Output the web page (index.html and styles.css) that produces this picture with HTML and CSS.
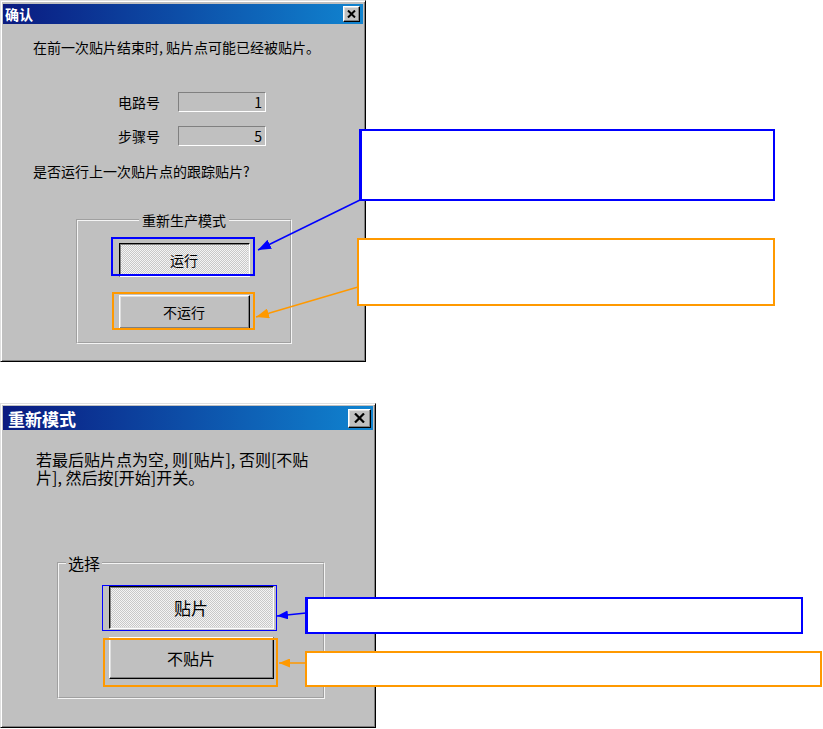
FILE: index.html
```html
<!DOCTYPE html>
<html lang="zh-CN">
<head>
<meta charset="UTF-8" />
<title>重新生产模式</title>
<link rel="stylesheet" href="styles.css">
</head>
<body>

<section class="shot shot-confirm">
  <div class="dlg dlg-confirm">
    <div class="titlebar">
      <span>确认</span>
      <span class="close">
        <svg width="9" height="8" viewBox="0 0 9 8"><path d="M1 0.5 L8 7.5 M8 0.5 L1 7.5" stroke="#000" stroke-width="2"/></svg>
      </span>
    </div>
    <div class="dlg-body">
      <p class="msg msg-first">在前一次贴片结束时, 贴片点可能已经被贴片。</p>
      <div class="field-row"><span class="lbl">电路号</span><span class="field">1</span></div>
      <div class="field-row field-row-2"><span class="lbl">步骤号</span><span class="field">5</span></div>
      <p class="msg msg-ask">是否运行上一次贴片点的跟踪贴片?</p>
      <fieldset class="group">
        <legend>重新生产模式</legend>
        <button class="btn btn-pressed">运行</button>
        <button class="btn btn-second">不运行</button>
      </fieldset>
    </div>
  </div>

  <div class="mark mark-blue c-run"></div>
  <div class="mark mark-orange c-norun"></div>
  <div class="note note-blue n-run"></div>
  <div class="note note-orange n-norun"></div>

  <svg class="arrows" width="823" height="403">
    <defs>
      <marker id="tip-blue-1" markerUnits="userSpaceOnUse" markerWidth="13" markerHeight="10" refX="13" refY="5" orient="auto">
        <path d="M0 0 L13 5 L0 10 Z" fill="#0000ff"/>
      </marker>
      <marker id="tip-orange-1" markerUnits="userSpaceOnUse" markerWidth="13" markerHeight="10" refX="13" refY="5" orient="auto">
        <path d="M0 0 L13 5 L0 10 Z" fill="#ff9900"/>
      </marker>
    </defs>
    <line x1="360" y1="200" x2="258" y2="250" stroke="#0000ff" stroke-width="1.5" marker-end="url(#tip-blue-1)"/>
    <line x1="358" y1="287" x2="256" y2="317" stroke="#ff9900" stroke-width="1.5" marker-end="url(#tip-orange-1)"/>
  </svg>
</section>

<section class="shot shot-mode">
  <div class="dlg dlg-mode">
    <div class="titlebar">
      <span>重新模式</span>
      <span class="close">
        <svg width="11" height="10" viewBox="0 0 11 10"><path d="M1 0.5 L10 9.5 M10 0.5 L1 9.5" stroke="#000" stroke-width="2.2"/></svg>
      </span>
    </div>
    <div class="dlg-body">
      <p class="msg msg-first">若最后贴片点为空, 则[贴片], 否则[不贴<br>片], 然后按[开始]开关。</p>
      <fieldset class="group">
        <legend>选择</legend>
        <button class="btn btn-pressed">贴片</button>
        <button class="btn btn-second">不贴片</button>
      </fieldset>
    </div>
  </div>

  <div class="mark mark-blue c-place"></div>
  <div class="mark mark-orange c-noplace"></div>
  <div class="note note-blue n-place"></div>
  <div class="note note-orange n-noplace"></div>

  <svg class="arrows" width="823" height="326">
    <defs>
      <marker id="tip-blue-2" markerUnits="userSpaceOnUse" markerWidth="11" markerHeight="9" refX="11" refY="4.5" orient="auto">
        <path d="M0 0 L11 4.5 L0 9 Z" fill="#0000ff"/>
      </marker>
      <marker id="tip-orange-2" markerUnits="userSpaceOnUse" markerWidth="11" markerHeight="9" refX="11" refY="4.5" orient="auto">
        <path d="M0 0 L11 4.5 L0 9 Z" fill="#ff9900"/>
      </marker>
    </defs>
    <line x1="306" y1="210" x2="277" y2="213" stroke="#0000ff" stroke-width="1.5" marker-end="url(#tip-blue-2)"/>
    <line x1="306" y1="260" x2="279" y2="260" stroke="#ff9900" stroke-width="1.5" marker-end="url(#tip-orange-2)"/>
  </svg>
</section>

</body>
</html>
```

FILE: styles.css
```css
:root {
  --face: #c0c0c0;
  --shadow: #808080;
  --dark: #000;
  --light: #dfdfdf;
  --blue: #0000ff;
  --orange: #ff9900;
}
* { box-sizing: border-box; }
body {
  margin: 0;
  background: #fff;
  font-family: "Noto Sans CJK SC", "Liberation Sans", sans-serif;
  color: #000;
}
.shot { position: relative; }
.shot-confirm { height: 403px; }
.shot-mode { height: 326px; }

/* ventana estilo Windows clasico */
.dlg {
  background: var(--face);
  border: 1px solid;
  border-color: var(--light) var(--dark) var(--dark) var(--light);
  box-shadow: inset 1px 1px #fff, inset -1px -1px var(--shadow);
  padding: 2px;
}
.dlg-confirm { width: 366px; height: 362px; font-size: 14px; }
.dlg-mode { width: 376px; height: 325px; font-size: 16px; }

.titlebar {
  display: flex;
  align-items: center;
  justify-content: space-between;
  background: linear-gradient(to right, #0a1a80, #1084d0);
  color: #fff;
  font-weight: 700;
}
.dlg-confirm .titlebar { height: 20px; margin-top: 1px; padding: 0 3px 0 2px; font-size: 14px; }
.dlg-mode .titlebar { height: 24px; padding: 0 2px 0 5px; font-size: 17px; }

.close {
  display: flex;
  align-items: center;
  justify-content: center;
  background: var(--face);
  border: 1px solid;
  border-color: #fff var(--dark) var(--dark) #fff;
  box-shadow: inset -1px -1px var(--shadow), inset 1px 1px var(--light);
}
.dlg-confirm .close { width: 17px; height: 16px; }
.dlg-mode .close { width: 23px; height: 19px; }

.msg { margin: 0; line-height: 16px; }
.dlg-confirm .dlg-body { padding-left: 30px; }
.dlg-confirm .msg-first { margin-top: 15px; }
.dlg-confirm .msg-ask { margin-top: 17px; }
.dlg-mode .dlg-body { padding-left: 33px; }
.dlg-mode .msg-first { margin-top: 20px; line-height: 18px; }

.field-row {
  display: flex;
  align-items: center;
  margin: 37px 0 0 85px;
}
.field-row-2 { margin-top: 14px; }
.lbl { width: 60px; }
.field {
  width: 88px;
  height: 20px;
  line-height: 18px;
  text-align: right;
  padding-right: 3px;
  border: 1px solid;
  border-color: var(--shadow) #fff #fff var(--shadow);
}

.group {
  margin: 0;
  padding: 0;
  border: 2px groove #f4f4f4;
  min-inline-size: 0;
}
.group legend { padding: 0 3px; }
.dlg-confirm .group { margin: 33px 0 0 43px; width: 216px; padding-bottom: 13px; }
.dlg-confirm .group legend { margin: 0 auto; line-height: 16px; }
.dlg-mode .group { margin: 68px 0 0 21px; width: 268px; padding-bottom: 18px; }
.dlg-mode .group legend { margin-left: 7px; padding: 0 2px; line-height: 18px; }

.btn {
  display: block;
  margin: 0 auto;
  padding: 0;
  font: inherit;
  color: #000;
  background: var(--face);
  border: 1px solid;
  border-color: #fff var(--dark) var(--dark) #fff;
  box-shadow: inset -1px -1px var(--shadow), inset 1px 1px var(--light);
}
.btn-pressed {
  border-color: var(--dark) #fff #fff var(--dark);
  box-shadow: inset 1px 1px var(--shadow), inset -1px -1px var(--light);
  background: repeating-conic-gradient(#c8c8c8 0 25%, #f4f4f4 0 50%) 0 0 / 2px 2px;
}
.dlg-confirm .btn { width: 131px; height: 34px; }
.dlg-confirm .btn-pressed { margin-top: 15px; }
.dlg-confirm .btn-second { margin-top: 18px; }
.dlg-mode .btn { width: 165px; height: 43px; font-size: 17px; }
.dlg-mode .btn-pressed { margin-top: 14px; }
.dlg-mode .btn-second { margin-top: 8px; height: 42px; font-size: 16px; }

/* anotaciones encima de las capturas */
.mark, .note { position: absolute; }
.mark-blue { border: 2px solid var(--blue); }
.mark-orange { border: 2px solid var(--orange); }
.note { background: #fff; border: 2px solid; }
.note-blue { border-color: var(--blue); border-left-width: 3px; }
.note-orange { border-color: var(--orange); }

.c-run { left: 111px; top: 237px; width: 144px; height: 39px; }
.c-norun { left: 112px; top: 292px; width: 143px; height: 38px; }
.n-run { left: 359px; top: 129px; width: 416px; height: 72px; }
.n-norun { left: 357px; top: 238px; width: 418px; height: 68px; }

.c-place { left: 102px; top: 182px; width: 175px; height: 46px; border-width: 1px; }
.c-noplace { left: 103px; top: 235px; width: 175px; height: 49px; }
.n-place { left: 305px; top: 194px; width: 498px; height: 37px; }
.n-noplace { left: 305px; top: 248px; width: 517px; height: 36px; }

.arrows { position: absolute; left: 0; top: 0; pointer-events: none; }
```
